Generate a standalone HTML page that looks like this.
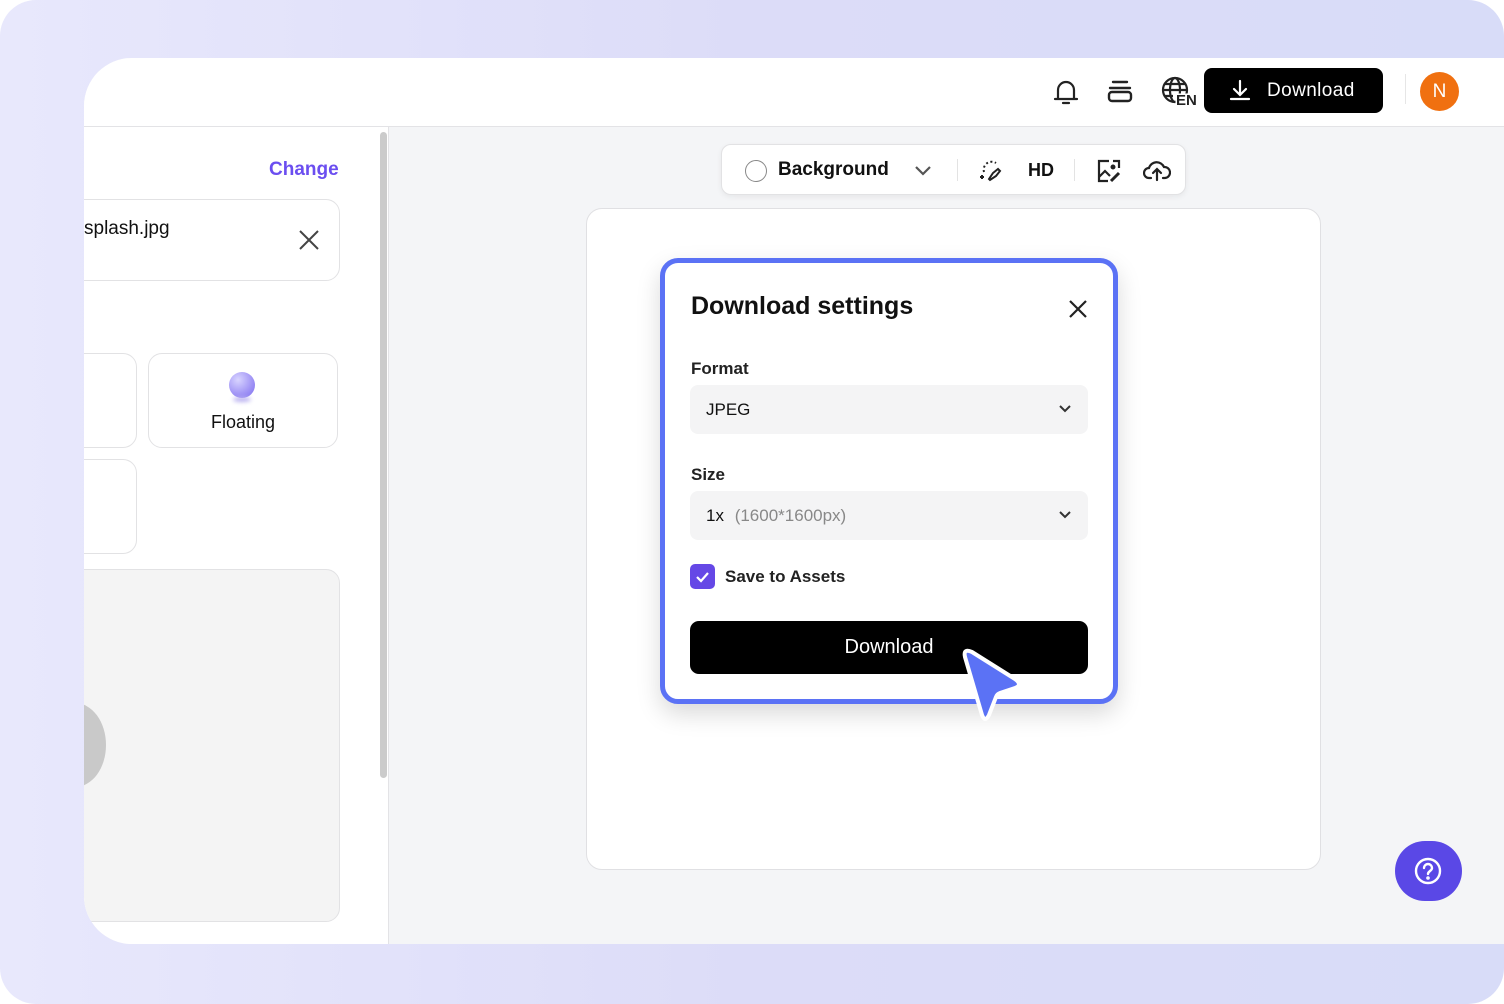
<!DOCTYPE html>
<html><head><meta charset="utf-8"><style>
*{box-sizing:border-box;margin:0;padding:0}
html{background:#fff}
body{width:1504px;height:1004px;overflow:hidden;font-family:"Liberation Sans",sans-serif;background:linear-gradient(90deg,#e8e8fc,#dcdcf8 50%,#d8dcf8);position:relative;color:#111;border-radius:36px}
.win{position:absolute;left:84px;top:58px;width:1420px;height:886px;background:#f4f5f7;border-radius:48px 0 0 48px;overflow:hidden}
.hdr{position:absolute;left:0;top:0;width:100%;height:69px;background:#fff;border-bottom:1px solid #e3e3e6}
.left{position:absolute;left:0;top:69px;width:305px;height:817px;background:#fff;border-right:1px solid #e3e3e6}
.abs{position:absolute}
.box{position:absolute;border:1.5px solid #e2e2e4;border-radius:14px;background:#fff}
</style></head><body>
<div class="win">
 <div class="hdr">
  <svg class="abs" style="left:966px;top:18px" width="32" height="32" viewBox="0 0 32 32" fill="none" stroke="#222" stroke-width="2.2" stroke-linecap="round"><path d="M8 23V14a8 8 0 0116 0v9M5 23h22M13 27h6"/></svg>
  <svg class="abs" style="left:1022px;top:18px" width="28" height="30" viewBox="0 0 28 30" fill="none" stroke="#222" stroke-width="2.4" stroke-linecap="round"><path d="M7 6h14M4 12h20"/><rect x="3" y="16" width="22" height="9" rx="3"/></svg>
  <svg class="abs" style="left:1075px;top:17px" width="42" height="34" viewBox="0 0 42 34" fill="none" stroke="#222" stroke-width="2.2"><circle cx="16" cy="15" r="12"/><ellipse cx="16" cy="15" rx="5" ry="12"/><path d="M4 15h24M6 9h20M6 21h8"/><text x="17" y="30" font-family="Liberation Sans" font-weight="bold" font-size="15" fill="#222" stroke="#fff" stroke-width="3" paint-order="stroke">EN</text></svg>
  <div class="abs" style="left:1120px;top:10px;width:179px;height:45px;background:#000;border-radius:8px;color:#fff;font-size:19px;line-height:45px;padding-left:63px;letter-spacing:.4px">Download</div>
  <svg class="abs" style="left:1144px;top:20px" width="24" height="24" viewBox="0 0 24 24" fill="none" stroke="#fff" stroke-width="2.2" stroke-linecap="round"><path d="M12 3v13M6 11l6 6 6-6M3 21h18"/></svg>
  <div class="abs" style="left:1321px;top:16px;width:1px;height:30px;background:#e6e6e6"></div>
  <div class="abs" style="left:1336px;top:14px;width:39px;height:39px;border-radius:50%;background:#f07010;color:#fff;font-size:19px;text-align:center;line-height:39px">N</div>
 </div>
 <div class="left">
  <div class="abs" style="left:185px;top:32px;color:#6b4ef0;font-size:19px;font-weight:bold">Change</div>
  <div class="box" style="left:-20px;top:72px;width:276px;height:82px"></div>
  <div class="abs" style="left:0;top:91px;font-size:19px">splash.jpg</div>
  <svg class="abs" style="left:214px;top:102px" width="22" height="22" viewBox="0 0 22 22" stroke="#444" stroke-width="2"><path d="M2 2l18 18M20 2L2 20"/></svg>
  <div class="box" style="left:-20px;top:226px;width:73px;height:95px"></div>
  <div class="box" style="left:64px;top:226px;width:190px;height:95px"></div>
  <div class="abs" style="left:145px;top:245px;width:26px;height:26px;border-radius:50%;background:radial-gradient(circle at 35% 30%,#d8d4ff,#9f92f5 60%,#7d6ef0)"></div>
  <div class="abs" style="left:149px;top:270px;width:18px;height:5px;border-radius:50%;background:#b9b0f0;filter:blur(2px)"></div>
  <div class="abs" style="left:64px;top:285px;width:190px;text-align:center;font-size:18px">Floating</div>
  <div class="box" style="left:-20px;top:332px;width:73px;height:95px"></div>
  <div class="box" style="left:-20px;top:442px;width:276px;height:353px;background:#f4f4f4"></div>
  <div class="abs" style="left:-40px;top:576px;width:62px;height:84px;border-radius:50%;background:#c9c9c9"></div>
  <div class="abs" style="left:296px;top:5px;width:7px;height:646px;background:#cbcbcb;border-radius:4px"></div>
 </div>
 <div class="abs" style="left:637px;top:86px;width:465px;height:51px;background:#fff;border:1px solid #e2e2e4;border-radius:10px;box-shadow:0 2px 6px rgba(0,0,0,.06)">
  <div class="abs" style="left:23px;top:15px;width:22px;height:22px;border:1.5px solid #888;border-radius:50%"></div>
  <div class="abs" style="left:56px;top:14px;font-size:19px;font-weight:bold">Background</div>
  <svg class="abs" style="left:192px;top:18px" width="18" height="14" viewBox="0 0 18 14" fill="none" stroke="#555" stroke-width="2.2"><path d="M2 4l7 7 7-7"/></svg>
  <div class="abs" style="left:235px;top:14px;width:1px;height:22px;background:#e3e3e3"></div>
  <svg class="abs" style="left:256px;top:13px" width="26" height="26" viewBox="0 0 26 26" fill="none" stroke="#222" stroke-width="2"><path d="M6 14a8 8 0 0112-9" stroke-dasharray="2 2.5"/><path d="M11 21l4-6 5-4 2 2-4 5-6 4z"/><path d="M2 19h4M4 17v4"/></svg>
  <div class="abs" style="left:306px;top:15px;font-size:18px;font-weight:bold">HD</div>
  <div class="abs" style="left:352px;top:14px;width:1px;height:22px;background:#e3e3e3"></div>
  <svg class="abs" style="left:374px;top:13px" width="26" height="26" viewBox="0 0 26 26" fill="none" stroke="#222" stroke-width="2.2"><path d="M13 3H3v20h9M3 19l6-6 5 5"/><path d="M23 10V3h-6"/><circle cx="17" cy="9" r="1.4" fill="#222"/><path d="M15 23l8-8" stroke-width="3"/></svg>
  <svg class="abs" style="left:421px;top:12px" width="28" height="26" viewBox="0 0 28 26" fill="none" stroke="#222" stroke-width="2.2" stroke-linecap="round"><path d="M8 21H6a5 5 0 010-10 8 8 0 0115-1 5.5 5.5 0 011 11h-2"/><path d="M14 23v-10M10 16l4-4 4 4"/></svg>
 </div>
 <div class="abs" style="left:502px;top:150px;width:735px;height:662px;background:#fff;border:1px solid #e0e0e3;border-radius:16px"></div>
</div>
<div class="abs" style="left:660px;top:258px;width:458px;height:446px;background:#fff;border:5px solid #5b72f5;border-radius:18px;box-shadow:0 10px 24px rgba(0,0,0,.15)">
 <div class="abs" style="left:26px;top:29px;font-size:25px;font-weight:bold">Download settings</div>
 <svg class="abs" style="left:403px;top:36px" width="20" height="20" viewBox="0 0 20 20" stroke="#222" stroke-width="2.2"><path d="M2 2l16 16M18 2L2 18"/></svg>
 <div class="abs" style="left:26px;top:96px;font-size:17px;font-weight:bold;color:#222">Format</div>
 <div class="abs" style="left:25px;top:122px;width:398px;height:49px;background:#f4f4f5;border-radius:8px;font-size:17px;line-height:49px;padding-left:16px">JPEG</div>
 <svg class="abs" style="left:392px;top:140px" width="16" height="12" viewBox="0 0 16 12" fill="none" stroke="#333" stroke-width="2"><path d="M3 3l5 5 5-5"/></svg>
 <div class="abs" style="left:26px;top:202px;font-size:17px;font-weight:bold;color:#222">Size</div>
 <div class="abs" style="left:25px;top:228px;width:398px;height:49px;background:#f4f4f5;border-radius:8px;font-size:17px;line-height:49px;padding-left:16px">1x <span style="color:#888;margin-left:6px">(1600*1600px)</span></div>
 <svg class="abs" style="left:392px;top:246px" width="16" height="12" viewBox="0 0 16 12" fill="none" stroke="#333" stroke-width="2"><path d="M3 3l5 5 5-5"/></svg>
 <div class="abs" style="left:25px;top:301px;width:25px;height:25px;background:#6548e6;border-radius:5px"></div>
 <svg class="abs" style="left:29px;top:305px" width="17" height="17" viewBox="0 0 17 17" fill="none" stroke="#fff" stroke-width="2.2"><path d="M3 9l4 4 7-8"/></svg>
 <div class="abs" style="left:60px;top:304px;font-size:17px;font-weight:bold;color:#222">Save to Assets</div>
 <div class="abs" style="left:25px;top:358px;width:398px;height:53px;background:#000;border-radius:9px;color:#fff;font-size:20px;text-align:center;line-height:53px">Download</div>
</div>
<svg class="abs" style="left:955px;top:645px" width="72" height="80" viewBox="0 0 72 80"><path d="M10 12 Q8 3 17 7 L60 34 Q68 40 60 43 L45 48 Q42 49 41 52 L34 70 Q30 78 27 70 Z" fill="#5b72f5" stroke="#fff" stroke-width="4" stroke-linejoin="round"/></svg>
<div class="abs" style="left:1395px;top:841px;width:67px;height:60px;border-radius:30px;background:#5a48e6"></div>
<svg class="abs" style="left:1413px;top:856px" width="30" height="30" viewBox="0 0 30 30" fill="none" stroke="#fff" stroke-width="2.4" stroke-linecap="round"><circle cx="15" cy="15" r="12"/><path d="M11 12a4 4 0 118 0c0 3-4 3-4 6"/><circle cx="15" cy="22" r="0.6" fill="#fff"/></svg>
</body></html>
